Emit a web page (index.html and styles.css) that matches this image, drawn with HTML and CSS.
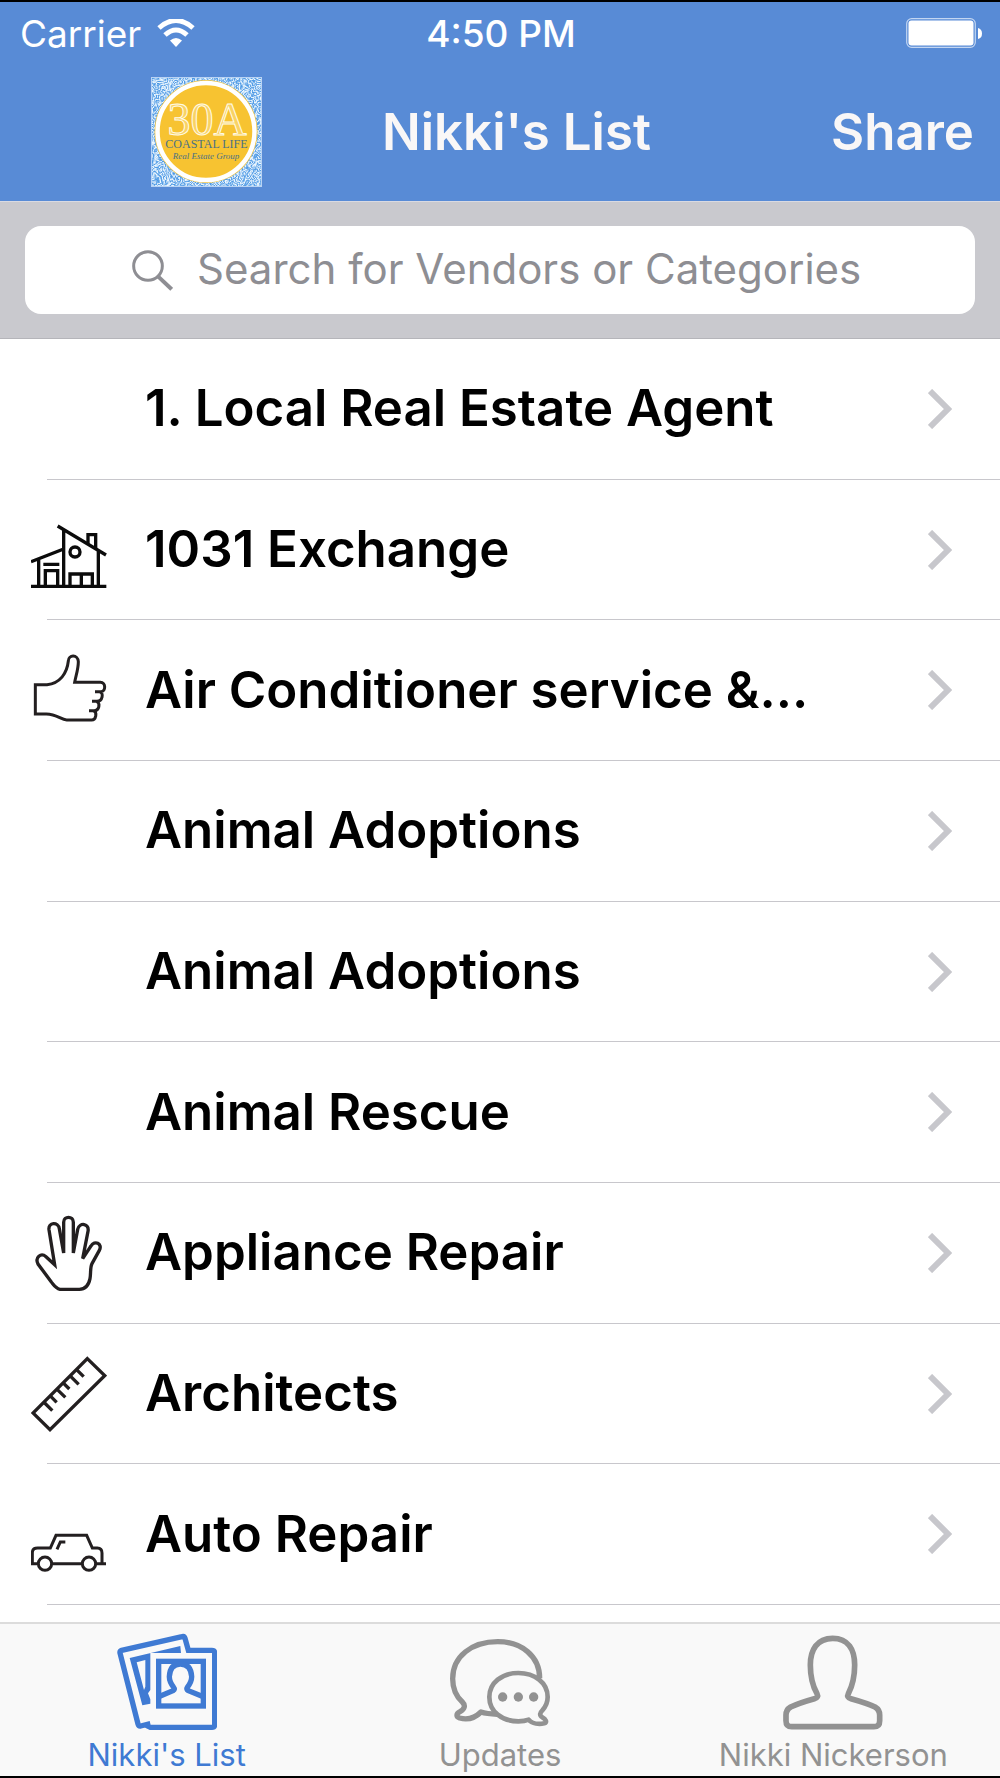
FILE: index.html
```html
<!DOCTYPE html>
<html lang="en">
<head>
    <meta charset="utf-8">
    <meta name="viewport" content="width=device-width, initial-scale=1">
    <title>Nikki's List</title>
    <link rel="stylesheet" href="styles.css">
</head>
<body>
    <!-- Shared shapes -->
    <svg class="defs" aria-hidden="true">
        <symbol id="chevron" viewBox="0 0 24 40">
            <path d="M2 2 L20 20 L2 38" fill="none" stroke="#c7c7cc" stroke-width="6"/>
        </symbol>
    </svg>

    <header>
        <div class="status-bar">
            <div class="carrier">
                <span>Carrier</span>
                <svg class="wifi" viewBox="0 0 38 28" aria-hidden="true">
                    <path d="M2 9 Q19 -6 36 9" fill="none" stroke="#fff" stroke-width="5"/>
                    <path d="M8 16 Q19 6 30 16" fill="none" stroke="#fff" stroke-width="5"/>
                    <path d="M13 21.500 Q19 16.500 25 21.500 L19 28 Z" fill="#fff"/>
                </svg>
            </div>
            <span class="time">4:50 PM</span>
            <svg class="battery" viewBox="0 0 76 30" aria-hidden="true">
                <rect x=".7" y=".7" width="68.600" height="28.600" rx="5" fill="none" stroke="#c3d6f2" stroke-width="1.200"/>
                <rect x="2.500" y="2.500" width="65" height="25" rx="3" fill="#fff"/>
                <path d="M72 10 Q76 11 76 15.500 Q76 20 72 21 Z" fill="#fff"/>
            </svg>
        </div>
        <div class="nav-bar">
            <svg class="logo" viewBox="0 0 111 110" role="img" aria-label="30A Coastal Life Real Estate Group">
                <filter id="swirl" x="0" y="0" width="100%" height="100%" color-interpolation-filters="sRGB">
                    <feTurbulence type="turbulence" baseFrequency="0.07" numOctaves="2" seed="7"/>
                    <feColorMatrix values="1 0 0 0 0  1 0 0 0 0  1 0 0 0 0  0 0 0 0 1"/>
                    <feComponentTransfer>
                        <feFuncR type="table" tableValues=".3 .95 .3 .95 .3 .95 .3 .95 .3 .95 .3 .95 .3 .95"/>
                        <feFuncG type="table" tableValues=".6 .98 .6 .98 .6 .98 .6 .98 .6 .98 .6 .98 .6 .98"/>
                        <feFuncB type="table" tableValues=".9 1 .9 1 .9 1 .9 1 .9 1 .9 1 .9 1"/>
                    </feComponentTransfer>
                </filter>
                <rect width="111" height="110" fill="#8fc1f2"/>
                <rect width="111" height="110" filter="url(#swirl)"/>
                <rect x=".5" y=".5" width="110" height="109" fill="none" stroke="#b9d3f3"/>
                <circle cx="55" cy="54.500" r="51.500" fill="#f2c23a"/>
                <circle cx="55" cy="54.500" r="48.500" fill="#f7c331" stroke="#fff" stroke-width="4.500"/>
                <text class="logo-number" x="56" y="58" text-anchor="middle">30A</text>
                <text class="logo-name" x="55.500" y="71" text-anchor="middle">COASTAL LIFE</text>
                <text class="logo-group" x="55" y="82" text-anchor="middle">Real Estate Group</text>
            </svg>
            <h1>Nikki's List</h1>
            <button type="button" class="share">Share</button>
        </div>
    </header>

    <form class="search-bar">
        <label class="search-box">
            <svg class="search-icon" viewBox="396 150 123 123" aria-hidden="true">
                <circle cx="444" cy="198" r="43" fill="none" stroke="#8e8e93" stroke-width="9"/>
                <path d="M474 229 L515 268" stroke="#8e8e93" stroke-width="12"/>
            </svg>
            <input type="search" placeholder="Search for Vendors or Categories" aria-label="Search for Vendors or Categories">
        </label>
    </form>

    <main>
        <ul class="category-list">
            <li><a href="#">
                <span class="icon"></span>
                <span class="name">1. Local Real Estate Agent</span>
                <svg class="chevron"><use href="#chevron"/></svg>
            </a></li>
            <li><a href="#">
                <svg class="icon" viewBox="94 33 228 228" fill="none" stroke="#0b0b0b" stroke-width="10">
                    <path d="M94 256 H320 M117 257 V172 M94 182 L192 144 M192 257 V86 M174 75 L319 162 M296 257 V150"/>
                    <path d="M265 128 V101 H288 V142 M131 190 H179 M137 257 V209 H174 V257 M211 257 V219 H278 V257 M245 219 V257"/>
                    <circle cx="226" cy="153" r="15"/>
                </svg>
                <span class="name">1031 Exchange</span>
                <svg class="chevron"><use href="#chevron"/></svg>
            </a></li>
            <li><a href="#">
                <svg class="icon" viewBox="94 455 228 228" fill="none" stroke="#231f20" stroke-width="9">
                    <path d="M107 553 H142 C182 549 202 518 206 482 C206 462 235 462 236 484 C236 506 229 524 225 546 H302 C319 546 319 573 304 574 H286 H300 C313 577 309 603 292 603 H277 H291 C302 608 300 631 283 631 H268 H281 C294 636 289 659 276 659 H201 C184 659 172 641 140 641 H107 Z"/>
                </svg>
                <span class="name">Air Conditioner service &amp;...</span>
                <svg class="chevron"><use href="#chevron"/></svg>
            </a></li>
            <li><a href="#">
                <span class="icon"></span>
                <span class="name">Animal Adoptions</span>
                <svg class="chevron"><use href="#chevron"/></svg>
            </a></li>
            <li><a href="#">
                <span class="icon"></span>
                <span class="name">Animal Adoptions</span>
                <svg class="chevron"><use href="#chevron"/></svg>
            </a></li>
            <li><a href="#">
                <span class="icon"></span>
                <span class="name">Animal Rescue</span>
                <svg class="chevron"><use href="#chevron"/></svg>
            </a></li>
            <li><a href="#">
                <svg class="icon" viewBox="94 72 228 228" fill="none" stroke="#231f20" stroke-width="10">
                    <path d="M181 295 C168 292 163 283 155 273 L115 219 C105 199 124 184 139 197 L165 221 L148 116 C145 93 176 92 179 113 L192 186 V94 C192 74 221 74 221 94 V186 L234 115 C240 92 270 98 265 121 L249 203 L274 165 C284 146 310 158 299 178 L277 218 C271 229 274 247 271 263 C267 283 255 295 239 295 Z"/>
                </svg>
                <span class="name">Appliance Repair</span>
                <svg class="chevron"><use href="#chevron"/></svg>
            </a></li>
            <li><a href="#">
                <svg class="icon" viewBox="94 494 228 228" fill="none" stroke="#231f20" stroke-width="10">
                    <path d="M263 502 L315 553 L151 715 L100 665 Z"/>
                    <path d="M132 632 L158 658 M151 613 L171 633 M170 592 L197 618 M189 573 L209 593 M210 552 L237 579 M230 534 L252 556"/>
                </svg>
                <span class="name">Architects</span>
                <svg class="chevron"><use href="#chevron"/></svg>
            </a></li>
            <li><a href="#">
                <svg class="icon" viewBox="94 -13 228 228" fill="none" stroke="#231f20" stroke-width="9">
                    <path d="M112 190 H98 V157 Q98 143 114 143 H152 L169 105 H261 L278 143 H293 Q307 143 307 158 V190 M289 190 H319 M159 190 H247 M172 147 L182 125 H197"/>
                    <circle cx="136" cy="190" r="20"/>
                    <circle cx="268" cy="190" r="20"/>
                </svg>
                <span class="name">Auto Repair</span>
                <svg class="chevron"><use href="#chevron"/></svg>
            </a></li>
        </ul>
    </main>

    <nav class="tab-bar">
        <a href="#" class="tab active">
            <svg viewBox="350 396 300 300" fill="none" stroke="currentColor" stroke-width="16" aria-hidden="true">
                <path d="M450 671 L421 678 Q415 679 413 672 L359 459 Q358 453 364 451 L545 410 Q552 408 554 415 L564 451 H635 Q643 451 643 459 V674 Q643 682 635 682 H450 L438 676"/>
                <path d="M540 438 L542 459 H450 V570 L443 580 L450 598 V611 L426 616 L388 474 Z M409 487 L431 570 L435 560 V480 Z" fill="currentColor" fill-rule="evenodd" stroke="none"/>
                <rect x="475" y="484" width="134" height="134"/>
                <path d="M475 590 L518 572 Q525 568 520 562 Q507 545 507 530 Q509 492 540 492 Q572 492 574 530 Q574 545 561 562 Q557 568 564 572 L609 590"/>
            </svg>
            <span>Nikki's List</span>
        </a>
        <a href="#" class="tab">
            <svg viewBox="147 96 300 300" fill="none" stroke="currentColor" stroke-width="16" stroke-linejoin="round" aria-hidden="true">
                <path d="M416 235 C416 168 361 125 290 125 C213 125 155 169 155 236 C155 272 169 292 184 306 C195 317 190 328 177 335 C165 341 165 350 176 354 C203 361 226 350 240 336 C255 341 268 342 289 343"/>
                <path d="M352 219 C303 219 265 248 265 291 C265 335 303 364 352 364 C365 364 376 362 383 359 C393 372 415 373 430 370 C440 367 434 357 424 352 C414 346 417 338 424 331 C434 320 440 307 440 291 C440 248 401 219 352 219 Z" stroke-width="14"/>
                <g fill="currentColor" stroke="none">
                    <circle cx="305" cy="291" r="14"/>
                    <circle cx="352" cy="291" r="14"/>
                    <circle cx="398" cy="291" r="14"/>
                </g>
            </svg>
            <span>Updates</span>
        </a>
        <a href="#" class="tab">
            <svg viewBox="248 96 300 300" fill="none" stroke="currentColor" stroke-width="17" stroke-linejoin="round" aria-hidden="true">
                <path d="M397 115 C350 115 330 150 330 195 C330 228 337 258 350 281 C354 289 352 293 342 296 C317 303 291 311 271 321 C261 327 257 333 257 345 V362 Q257 380 274 380 H521 Q538 380 538 362 V345 C538 333 534 327 524 321 C504 311 477 303 452 296 C442 293 440 289 444 281 C456 258 463 228 463 195 C463 150 444 115 397 115 Z"/>
            </svg>
            <span>Nikki Nickerson</span>
        </a>
    </nav>
</body>
</html>
```
FILE: styles.css
```css
* {
    box-sizing: border-box;
}

body {
    display: flex;
    flex-direction: column;
    min-height: 100vh;
    margin: 0;
    border-top: 2px solid #000;
    border-bottom: 2px solid #000;
    font-family: Inter, "Liberation Sans", sans-serif;
    background-color: #fff;
    color: #000;
}

a {
    color: inherit;
    text-decoration: none;
}

.defs {
    display: none;
}

/* Status bar and title */
header {
    background-color: #588bd6;
    color: #fff;
}

.status-bar {
    display: grid;
    grid-template-columns: 1fr auto 1fr;
    align-items: center;
    height: 62px;
    padding: 0 18px 0 20px;
    font-size: 37px;
}

.carrier {
    display: flex;
    align-items: center;
    gap: 16px;
}

.wifi {
    width: 38px;
    height: 28px;
}

.time {
    font-weight: 500;
}

.battery {
    justify-self: end;
    width: 76px;
    height: 30px;
}

.nav-bar {
    display: flex;
    align-items: center;
    height: 137px;
    padding: 0 26px 2px 151px;
    color: #f9f7f7;
}

.logo {
    width: 111px;
    height: 110px;
}

.logo-number {
    font: 46px "Liberation Serif", serif;
    fill: #f9d263;
    stroke: #fffbe8;
    stroke-width: 1;
}

.logo-name {
    font: 12px "Liberation Serif", serif;
    fill: #4a7186;
}

.logo-group {
    font: italic 9px "Liberation Serif", serif;
    fill: #4a7186;
}

h1,
.share {
    margin: 0;
    font-size: 51px;
    font-weight: 600;
}

h1 {
    margin-left: 120px;
}

.share {
    margin-left: auto;
    padding: 0;
    border: none;
    background: none;
    color: inherit;
    font-family: inherit;
    cursor: pointer;
}

/* Search */
.search-bar {
    padding: 24px 25px;
    border-top: 1px solid #d9dae2;
    border-bottom: 1px solid #b5b5ba;
    background-color: #c9c9ce;
}

.search-box {
    display: flex;
    align-items: center;
    gap: 24px;
    height: 88px;
    padding: 0 60px 0 107px;
    border-radius: 16px;
    background-color: #fff;
}

.search-icon {
    flex: none;
    width: 41px;
    height: 41px;
}

.search-box input {
    flex: 1;
    min-width: 0;
    padding: 0 0 4px;
    border: none;
    outline: none;
    background: none;
    font-family: inherit;
    font-size: 42px;
}

.search-box input::placeholder {
    color: #8e8e93;
}

/* Category list */
main {
    flex: 1;
    display: flex;
    padding-bottom: 17px;
}

.category-list {
    flex: 1;
    display: flex;
    flex-direction: column;
    min-width: 0;
    margin: 0;
    padding: 0 0 0 47px;
    list-style: none;
}

.category-list li {
    flex: 1;
    display: flex;
    border-bottom: 1px solid #c8c7cc;
}

.category-list a {
    flex: 1;
    display: flex;
    align-items: center;
    min-width: 0;
    margin-left: -16px;
    padding-right: 48px;
}

.icon {
    flex: none;
    width: 76px;
    height: 76px;
}

.name {
    flex: 1;
    min-width: 0;
    margin: 0 38px;
    padding-bottom: 2px;
    overflow: hidden;
    font-size: 51px;
    font-weight: 600;
    text-overflow: ellipsis;
    white-space: nowrap;
}

.chevron {
    flex: none;
    width: 24px;
    height: 40px;
}

/* Tabs */
.tab-bar {
    display: flex;
    border-top: 2px solid #dcdcdc;
    background-color: #f9f9f9;
    color: #929292;
}

.tab {
    flex: 1;
    display: flex;
    flex-direction: column;
    align-items: center;
    gap: 5px;
    padding: 8px 0 3px;
    font-size: 31px;
    line-height: 36px;
}

.tab svg {
    width: 100px;
    height: 100px;
}

.tab.active {
    color: #3f7ad3;
}
```
